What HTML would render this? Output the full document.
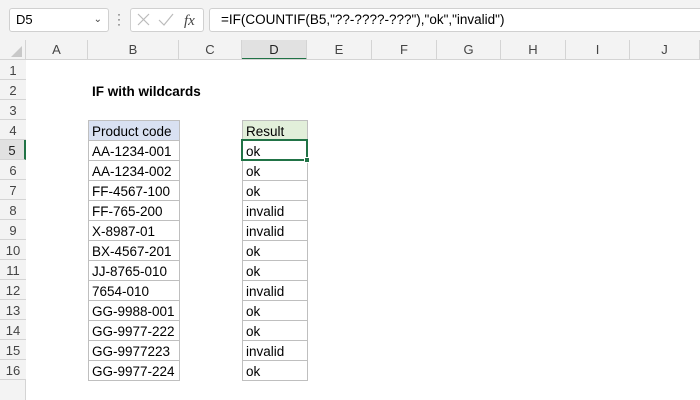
<!DOCTYPE html><html><head><style>
body{margin:0;width:700px;height:400px;background:#fff;position:relative;overflow:hidden;font-family:"Liberation Sans",Calibri,sans-serif;}
.a{position:absolute;box-sizing:border-box}
.ch{position:absolute;top:40px;height:20px;line-height:20px;text-align:center;font-size:13px;color:#444;border-right:1px solid #d4d4d4;box-sizing:border-box;background:#f3f3f3}
.rh{position:absolute;left:0;width:26px;height:20px;line-height:22px;text-align:center;font-size:13px;color:#444;background:#f3f3f3;border-bottom:1px solid #d4d4d4;box-sizing:border-box}
.c{position:absolute;height:21px;line-height:21px;font-size:13.5px;color:#000;padding-left:3px;box-sizing:border-box;border:1px solid #bfbfbf}
</style></head><body>
<div class="a" style="left:0;top:0;width:700px;height:40px;background:#f3f3f3"></div>
<div class="a" style="left:9px;top:8px;width:100px;height:24px;background:#fff;border:1px solid #d0d0d0;border-radius:3px;font-size:13px;line-height:22px;padding-left:6px">D5<span style="position:absolute;right:6px;top:0;font-size:10px;color:#444">&#8964;</span></div>
<div class="a" style="left:117px;top:12px;width:3px;height:16px;color:#444;font-size:12px;line-height:5px">·<br>·<br>·</div>
<div class="a" style="left:130px;top:8px;width:74px;height:24px;background:#fff;border:1px solid #d0d0d0;border-radius:3px"></div>
<svg class="a" style="left:130px;top:8px" width="74" height="24"><path d="M8 6l11 11M19 6L8 17" stroke="#bbb" stroke-width="1.2" fill="none"/><path d="M29 12l5 5 9-11" stroke="#bbb" stroke-width="1.2" fill="none"/><text x="54" y="17" font-family="Liberation Serif" font-style="italic" font-size="15" fill="#444">fx</text></svg>
<div class="a" style="left:209px;top:8px;width:495px;height:24px;background:#fff;border:1px solid #d0d0d0;border-radius:3px;font-size:13.5px;line-height:22px;padding-left:11px">=IF(COUNTIF(B5,"??-????-???"),"ok","invalid")</div>
<div class="a" style="left:0;top:40px;width:26px;height:20px;background:#f3f3f3;border-right:1px solid #d4d4d4"></div>
<svg class="a" style="left:10px;top:46px" width="14" height="12"><path d="M12 0V11H1z" fill="#c8c8c8"/></svg>
<div class="ch" style="left:26px;width:62px">A</div>
<div class="ch" style="left:88px;width:91px">B</div>
<div class="ch" style="left:179px;width:63px">C</div>
<div class="ch" style="left:242px;width:65px;background:#e1e1e1;border-bottom:2px solid #217346;color:#222">D</div>
<div class="ch" style="left:307px;width:65px">E</div>
<div class="ch" style="left:372px;width:65px">F</div>
<div class="ch" style="left:437px;width:64px">G</div>
<div class="ch" style="left:501px;width:65px">H</div>
<div class="ch" style="left:566px;width:64px">I</div>
<div class="ch" style="left:630px;width:70px">J</div>
<div class="a" style="left:0;top:59px;width:700px;height:1px;background:#d4d4d4"></div>
<div class="a" style="left:0;top:60px;width:26px;height:340px;background:#f3f3f3;border-right:1px solid #d4d4d4"></div>
<div class="rh" style="top:60px">1</div><div class="rh" style="top:80px">2</div><div class="rh" style="top:100px">3</div><div class="rh" style="top:120px">4</div>
<div class="rh" style="top:140px;background:#e1e1e1;border-right:2px solid #217346;color:#222">5</div>
<div class="rh" style="top:160px">6</div><div class="rh" style="top:180px">7</div><div class="rh" style="top:200px">8</div><div class="rh" style="top:220px">9</div><div class="rh" style="top:240px">10</div><div class="rh" style="top:260px">11</div><div class="rh" style="top:280px">12</div><div class="rh" style="top:300px">13</div><div class="rh" style="top:320px">14</div><div class="rh" style="top:340px">15</div><div class="rh" style="top:360px">16</div>
<div class="a" style="left:92px;top:81px;height:20px;line-height:21px;font-size:13.5px;font-weight:bold">IF with wildcards</div>
<div class="c" style="left:88px;top:120px;width:92px;background:#d9e1f2">Product code</div>
<div class="c" style="left:242px;top:120px;width:66px;background:#e2efda">Result</div>
<div class="c" style="left:88px;top:140px;width:92px">AA-1234-001</div>
<div class="c" style="left:88px;top:160px;width:92px">AA-1234-002</div>
<div class="c" style="left:88px;top:180px;width:92px">FF-4567-100</div>
<div class="c" style="left:88px;top:200px;width:92px">FF-765-200</div>
<div class="c" style="left:88px;top:220px;width:92px">X-8987-01</div>
<div class="c" style="left:88px;top:240px;width:92px">BX-4567-201</div>
<div class="c" style="left:88px;top:260px;width:92px">JJ-8765-010</div>
<div class="c" style="left:88px;top:280px;width:92px">7654-010</div>
<div class="c" style="left:88px;top:300px;width:92px">GG-9988-001</div>
<div class="c" style="left:88px;top:320px;width:92px">GG-9977-222</div>
<div class="c" style="left:88px;top:340px;width:92px">GG-9977223</div>
<div class="c" style="left:88px;top:360px;width:92px">GG-9977-224</div>
<div class="c" style="left:242px;top:140px;width:66px">ok</div>
<div class="c" style="left:242px;top:160px;width:66px">ok</div>
<div class="c" style="left:242px;top:180px;width:66px">ok</div>
<div class="c" style="left:242px;top:200px;width:66px">invalid</div>
<div class="c" style="left:242px;top:220px;width:66px">invalid</div>
<div class="c" style="left:242px;top:240px;width:66px">ok</div>
<div class="c" style="left:242px;top:260px;width:66px">ok</div>
<div class="c" style="left:242px;top:280px;width:66px">invalid</div>
<div class="c" style="left:242px;top:300px;width:66px">ok</div>
<div class="c" style="left:242px;top:320px;width:66px">ok</div>
<div class="c" style="left:242px;top:340px;width:66px">invalid</div>
<div class="c" style="left:242px;top:360px;width:66px">ok</div>
<div class="a" style="left:241px;top:139px;width:67px;height:22px;border:2px solid #217346"></div>
<div class="a" style="left:304px;top:157px;width:6px;height:6px;background:#217346;border:1px solid #fff"></div>
</body></html>
